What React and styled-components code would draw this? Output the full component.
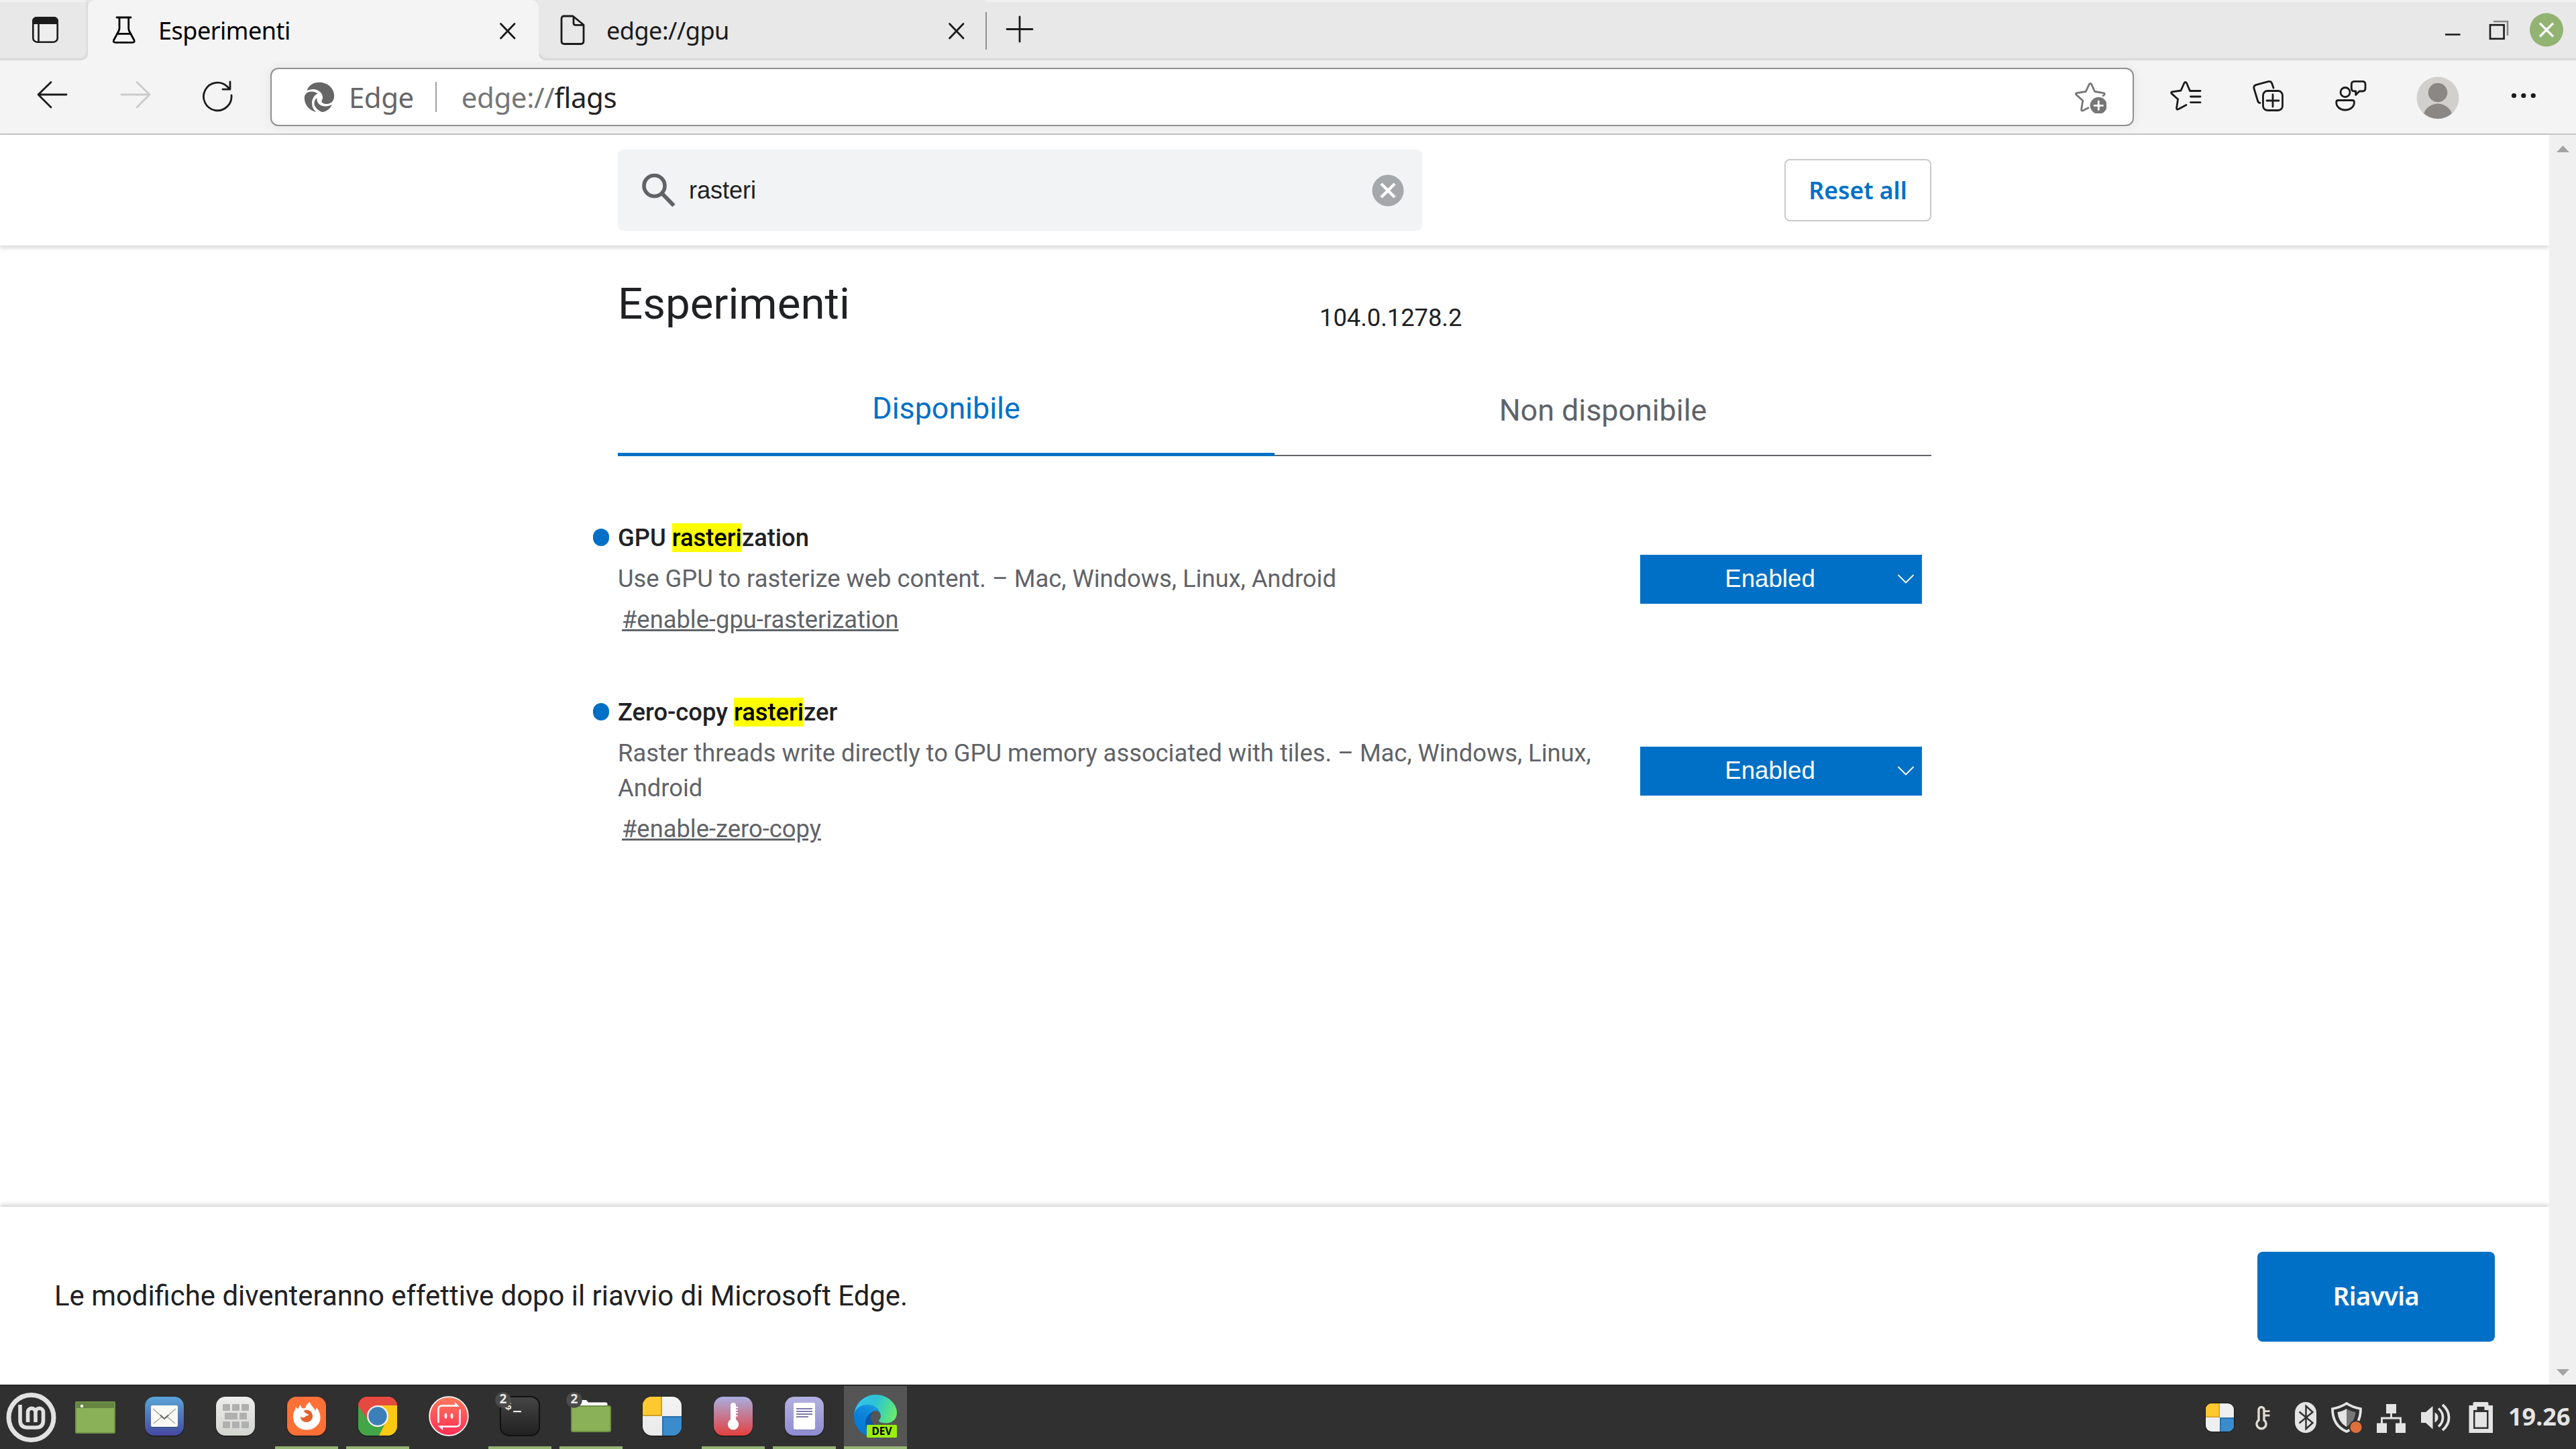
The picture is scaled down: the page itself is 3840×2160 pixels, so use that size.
import React from "react";
import styled, { createGlobalStyle } from "styled-components";

const GlobalStyle = createGlobalStyle`
  * {
    box-sizing: border-box;
  }
  body {
    margin: 0;
    background-color: white;
    font-family: Roboto, sans-serif;
  }
  svg {
    display: block;
    flex-shrink: 0;
  }
`;

const Screen = styled.div`
  width: 3840px;
  height: 2160px;
  display: flex;
  flex-direction: column;
  overflow: hidden;
`;

/* tab strip */
const TabStrip = styled.div`
  height: 90px;
  display: flex;
  background-color: #f4f4f4;
  font-family: "Noto Sans", sans-serif;
`;
const StripStart = styled.div`
  width: 131px;
  padding: 22px 0 0 46px;
  background: linear-gradient(#f0f0f0 3px, #e8e8e8 3px);
  border-bottom-right-radius: 10px;
  box-shadow: inset -2px -3px 3px rgba(0, 0, 0, 0.07);
`;
const ActiveTabShell = styled.div`
  width: 672px;
  background: linear-gradient(#e8e8e8 20px, #f4f4f4 20px);
`;
const ActiveTab = styled.div`
  height: 90px;
  display: flex;
  padding: 22px 33px 0 33px;
  background-color: #f4f4f4;
  border-radius: 12px 12px 0 0;
`;
const StripRest = styled.div`
  flex: 1;
  display: flex;
  background: linear-gradient(#f0f0f0 3px, #e8e8e8 3px);
  border-bottom-left-radius: 10px;
  box-shadow: inset 2px -3px 3px rgba(0, 0, 0, 0.07);
`;
const Tab = styled.div`
  width: 666px;
  height: 80px;
  display: flex;
  padding: 22px 30px 0 29px;
  background-color: #e8e8e8;
`;
const TabTitle = styled.div`
  flex: 1;
  margin-left: 30px;
  font-size: 36px;
  line-height: 48px;
  letter-spacing: -0.5px;
  color: ${(props) => props.color};
`;
const TabDivider = styled.div`
  width: 2px;
  height: 56px;
  margin-top: 18px;
  background-color: #8f8f8f;
`;
const WindowControls = styled.div`
  display: flex;
  margin: 18px 19px 0 auto;
`;

/* toolbar */
const Toolbar = styled.div`
  height: 111px;
  display: flex;
  align-items: flex-start;
  background-color: #f4f4f4;
  border-bottom: 2px solid #c4c4c4;
`;
const ToolButton = styled.div`
  margin: 29px 0 0 ${(props) => props.$gap}px;
`;
const AddressBar = styled.div`
  width: 2778px;
  height: 87px;
  margin: 11px 0 0 55px;
  padding: 0 39px 0 48px;
  display: flex;
  align-items: center;
  background-color: white;
  border: 2.5px solid #8f8f8f;
  border-radius: 12px;
  box-shadow: 0 0 16px rgba(0, 0, 0, 0.08);
  font-family: "Noto Sans", sans-serif;
  font-size: 42px;
  letter-spacing: -0.5px;
  color: #666;
`;
const SiteName = styled.span`
  margin-left: 21px;
`;
const AddressDivider = styled.div`
  width: 2px;
  height: 45px;
  margin: 0 37px 0 32px;
  background-color: #a0a0a0;
`;
const Url = styled.span`
  flex: 1;
  letter-spacing: -0.4px;
  color: #767676;
  b {
    font-weight: 400;
    color: #222;
  }
`;
const Avatar = styled.div`
  margin: 24px 0 0 74px;
`;

/* page */
const Viewport = styled.div`
  height: 1863px;
  display: flex;
`;
const Page = styled.div`
  width: 3800px;
  display: flex;
  flex-direction: column;
  color: #202124;
`;
const Scrollbar = styled.div`
  width: 40px;
  padding: 16px 0 13px 11px;
  display: flex;
  flex-direction: column;
  justify-content: space-between;
  background-color: #f0f0f0;
`;
const Header = styled.div`
  height: 165px;
  display: flex;
  justify-content: center;
  box-shadow: 0 4px 6px rgba(0, 0, 0, 0.15);
`;
const HeaderInner = styled.div`
  width: 1958px;
  display: flex;
  align-items: center;
  justify-content: space-between;
`;
const SearchBox = styled.div`
  width: 1199px;
  height: 121px;
  display: flex;
  align-items: center;
  padding: 0 27px 0 36px;
  background-color: #f1f3f4;
  border-radius: 8px;
`;
const SearchText = styled.div`
  flex: 1;
  margin-left: 18px;
  font-family: "Liberation Sans", sans-serif;
  font-size: 36px;
`;
const ResetButton = styled.div`
  width: 219px;
  height: 93px;
  border: 2px solid #cacaca;
  border-radius: 8px;
  text-align: center;
  font-family: "Noto Sans", sans-serif;
  font-size: 35.5px;
  font-weight: 600;
  line-height: 89px;
  color: #0070c6;
`;
const Main = styled.div`
  flex: 1;
  width: 1958px;
  margin: 0 auto;
`;
const TitleRow = styled.div`
  height: 84px;
  margin-top: 48px;
  display: flex;
`;
const Title = styled.h1`
  width: 1046px;
  margin: 0;
  font-size: 65.4px;
  font-weight: 400;
  line-height: 78px;
`;
const Version = styled.div`
  margin-top: 38px;
  font-size: 36.3px;
  line-height: 44px;
`;
const Tabs = styled.div`
  height: 119px;
  margin-top: 63px;
  display: flex;
`;
const PageTab = styled.div`
  flex: 1;
  padding-top: ${(props) => (props.$active ? 21 : 24)}px;
  border-bottom: ${(props) =>
    props.$active ? "5px solid #0070c6" : "2px solid #5f6368"};
  color: ${(props) => (props.$active ? "#0070c6" : "#5f6368")};
  text-align: center;
  font-size: 44.8px;
  line-height: 54px;
`;
const Experiments = styled.div`
  margin-top: 96px;
  display: flex;
  flex-direction: column;
  gap: 86px;
`;
const Experiment = styled.div`
  position: relative;
  display: flex;
  align-items: center;
  justify-content: space-between;
  padding-right: 14px;
  font-size: 36.33px;
  line-height: 52px;
  color: #5f6368;
  &::before {
    content: "";
    position: absolute;
    left: -37px;
    top: 12px;
    width: 24px;
    height: 26px;
    border-radius: 12px;
    background-color: #0070c6;
  }
`;
const Info = styled.div`
  width: 1490px;
`;
const Name = styled.div`
  font-weight: 500;
  color: #202124;
  mark {
    background-color: #ff0;
  }
`;
const Description = styled.div`
  margin: 9px 0;
`;
const Anchor = styled.a`
  display: block;
  margin-left: 6px;
  text-decoration: underline;
`;
const Select = styled.div`
  width: 420px;
  height: 73px;
  display: flex;
  align-items: center;
  padding-right: 12px;
  background-color: #0070c6;
  color: white;
  font-family: "Liberation Sans", sans-serif;
  font-size: 36.7px;
`;
const SelectValue = styled.div`
  flex: 1;
  padding-left: 3px;
  text-align: center;
`;
const Footer = styled.div`
  height: 265px;
  display: flex;
  align-items: center;
  justify-content: space-between;
  padding: 0 81px 0 81px;
  box-shadow: 0 -4px 6px rgba(0, 0, 0, 0.15);
  font-size: 41.9px;
`;
const RestartButton = styled.div`
  width: 354px;
  height: 134px;
  margin-top: 3px;
  border-radius: 8px;
  background-color: #0070c6;
  color: white;
  text-align: center;
  font-family: "Noto Sans", sans-serif;
  font-size: 38px;
  font-weight: 600;
  letter-spacing: -0.5px;
  line-height: 131px;
`;

/* desktop panel */
const Panel = styled.div`
  height: 96px;
  display: flex;
  background-color: #303030;
  border-top: 2px solid #262626;
`;
const Launchers = styled.div`
  display: flex;
  gap: 12px;
`;
const Launcher = styled.div`
  width: 94px;
  height: 94px;
  padding: 10px 12px 0;
  background-color: ${(props) => (props.$focused ? "#555" : "transparent")};
  border-bottom: 4px solid
    ${(props) => (props.$running ? "#92b372" : "transparent")};
  background-clip: padding-box;
`;
const Tray = styled.div`
  display: flex;
  margin-left: auto;
  padding: 22px 7px 0 0;
`;
const TrayItem = styled.div`
  margin-left: ${(props) => props.$gap}px;
`;
const Clock = styled.div`
  width: 94px;
  margin-left: 21px;
  font-family: "Noto Sans", sans-serif;
  font-size: 36px;
  font-weight: 700;
  line-height: 48px;
  white-space: nowrap;
  color: #e4e4e4;
`;

const Line = ({ size = 48, height, color = "#1b1b1b", width = 2.8, children }) => (
  <svg
    width={size}
    height={height || size}
    fill="none"
    stroke={color}
    strokeWidth={width}
    strokeLinecap="round"
    strokeLinejoin="round"
  >
    {children}
  </svg>
);

const CloseIcon = () => (
  <Line size={26} height={48} width={2.8}>
    <path d="M2.5 13.5L23 35M23 13.5L2.5 35" />
  </Line>
);

const EdgeSwirl = () => (
  <svg width="46" height="46" fill="#666">
    <path d="M4.5 13C7 5 14 .7 23 .7C36 .7 45.2 10 45.2 21C45.2 28 41 33 34 33C30 33 26.5 31.5 26.5 29C26.5 27 28 26.5 28 23C28 16 21 11 14 11C10 11 7 12 4.5 13Z" />
    <path d="M.8 24C.8 17.5 6 14.5 11.5 14.5C15 14.5 18 15.5 20.5 17.5C15 20 12 26 12 32C12 37 14.5 42 18.5 45C8 43 .8 34 .8 24Z" />
    <path d="M19.5 24C18.5 31 24 36.5 32 36.5C36 36.5 39 35.5 42 34C39 40.5 33.5 44.5 27 45C19 42 15 36 15.5 31C15.7 28 17 25.5 19.5 24Z" />
  </svg>
);

const StarAdd = () => (
  <Line color="#767676">
    <path d="M43 21.7L45 20Q46 18.2 43.5 17.7L30.7 15.5L25.8 4.8Q24 1.8 22.2 4.8L17.3 15.5L4 17.6Q1.3 18.4 3.2 20.4L12.8 29L10.7 41.7Q10.5 45 13.3 43.8L21 39.8" />
    <circle cx="36.3" cy="36.3" r="12.6" fill="#767676" stroke="none" />
    <path d="M36.3 30V42.6M30 36.3H42.6" stroke="white" />
  </Line>
);

const Tile = ({ id, top, bottom, edge = "#1c1c1c", children }) => (
  <svg width="70" height="70">
    <defs>
      <linearGradient id={id} x2="0" y2="1">
        <stop stopColor={top} />
        <stop offset="1" stopColor={bottom} />
      </linearGradient>
      <clipPath id={id + "-clip"}>
        <rect x="6" y="6" width="58" height="58" rx="14" />
      </clipPath>
    </defs>
    <rect x="5.5" y="5.5" width="59" height="60" rx="14.5" fill={edge} />
    <rect x="6" y="6" width="58" height="58" rx="14" fill={`url(#${id})`} />
    <g clipPath={`url(#${id}-clip)`}>{children}</g>
  </svg>
);

const MintMenu = () => (
  <svg width="92" height="94" fill="none" stroke="#e2e2e2">
    <circle cx="46.5" cy="47" r="33.5" strokeWidth="7" />
    <path
      d="M30 28V51Q30 62 41 62H54Q64.5 62 64.5 51V39A5.7 5.7 0 0 0 53 39V54M41.5 54V39A5.7 5.7 0 0 1 53 39"
      strokeWidth="5.6"
    />
  </svg>
);

const ShowDesktop = () => (
  <svg width="70" height="70">
    <rect x="8" y="13" width="60" height="48" rx="2" fill="#6f9148" />
    <rect x="10" y="23" width="56" height="36" fill="#8bb158" />
    <rect x="10" y="15" width="56" height="8" fill="#668542" />
    <circle cx="18" cy="20" r="2.2" fill="white" />
  </svg>
);

const Mail = () => (
  <Tile id="mail" top="#59a5d8" bottom="#4548a0">
    <rect x="15" y="21" width="40" height="32" rx="2" fill="#3c4f8f" />
    <rect x="15" y="19" width="40" height="32" rx="2" fill="#f8f8f4" />
    <path d="M18 24L35 39L52 24M19 46L31 36M51 46L39 36" fill="none" stroke="#a5a5a0" strokeWidth="1.4" />
    <path d="M29 33.5L35 39L41 33.5" fill="none" stroke="#666" strokeWidth="2" />
  </Tile>
);

const calcKeys = [
  [16, 17, 11], [30, 17, 11], [44, 17, 11],
  [19, 30, 19], [41, 30, 11],
  [16, 43, 11], [30, 43, 11], [44, 43, 11],
];

const Keyboard = () => (
  <Tile id="keys" top="#ededed" bottom="#d3d5cf">
    {calcKeys.map(([x, y, w]) => (
      <rect key={`${x}-${y}`} x={x} y={y} width={w} height="10" rx="1" fill="#b0b0ae" />
    ))}
  </Tile>
);

const Firefox = () => (
  <Tile id="firefox" top="#ff7139" bottom="#ff6f36">
    <path
      d="M40 14C41 19 46 22 48 27L50 22.5C53 26 55.5 31 55.5 37C55.5 48 46 55.5 35 55.5C24 55.5 15 48 15 36.5C15 31 16 28 18 25.5L18.5 21L22 24.5L25.5 18L28 23C31 24 33 23 34 22C34 18 37 16 40 14Z"
      fill="white"
    />
    <path
      d="M31 27C37 23.5 44 28 44 35C44 40.5 40 44 35 44C29.5 44 26 40 26 35.5C29 38.5 33 37 34 34.5C36 34.5 38 34 38 32.5C36 31 33 31.5 31 27Z"
      fill="#e4622c"
    />
  </Tile>
);

const Chrome = () => (
  <Tile id="chrome" top="#e9574d" bottom="#2f9a45">
    <path d="M5 5H65V20H35L20.5 40L6 20Z" fill="#e5493f" />
    <path d="M5 18L20.5 42L45 46L37 65H5Z" fill="#43a547" />
    <path d="M35 19H65V65H36.5L49 40Z" fill="#fbc912" />
    <circle cx="35" cy="35" r="16" fill="#f4f4f4" />
    <circle cx="35" cy="35" r="13.7" fill="#3d7fb8" />
  </Tile>
);

const SyncApp = () => (
  <svg width="70" height="70" fill="none">
    <defs>
      <linearGradient id="sync" x2="0" y2="1">
        <stop stopColor="#ff7b5c" />
        <stop offset="1" stopColor="#ff2c56" />
      </linearGradient>
    </defs>
    <circle cx="35" cy="35" r="28.8" fill="url(#sync)" stroke="white" strokeWidth="1.8" />
    <path
      d="M19.5 45V25Q19.5 19.5 25 19.5H48M51.5 25V45Q51.5 50.5 46 50.5H22"
      stroke="white"
      strokeWidth="2.6"
    />
    <path d="M44 14L51 20.8H44ZM26 56L19 49.2H26Z" fill="white" />
    <path d="M30.5 32.5V37M39.5 32.5V37" stroke="white" strokeWidth="3.6" strokeLinecap="round" />
  </svg>
);

const Badge = () => (
  <>
    <circle cx="10" cy="11" r="11.8" fill="#4a4a4a" />
    <text x="10" y="15.5" textAnchor="middle" fontFamily="Noto Sans" fontWeight="700" fontSize="19" fill="#e8e8e8">
      2
    </text>
  </>
);

const Terminal = () => (
  <svg width="70" height="70" overflow="visible">
    <defs>
      <linearGradient id="term" x2="0" y2="1">
        <stop stopColor="#454545" />
        <stop offset="1" stopColor="#202020" />
      </linearGradient>
    </defs>
    <rect x="6" y="6" width="58" height="58" rx="13" fill="url(#term)" stroke="#111" strokeWidth="2" />
    <text x="12.5" y="25" fontFamily="Liberation Mono" fontWeight="700" fontSize="17" fill="#eee">
      $
    </text>
    <rect x="25" y="27" width="12" height="2.2" fill="#eee" />
    <Badge />
  </svg>
);

const Files = () => (
  <svg width="70" height="70" overflow="visible">
    <path d="M15 24V13Q15 11 17 11H28L31 14.5H57Q59.5 14.5 59.5 17V24Z" fill="white" />
    <rect x="5" y="19" width="60" height="40" rx="3" fill="#6f9148" />
    <rect x="7" y="21" width="56" height="36" rx="1.5" fill="#8bb158" />
    <Badge />
  </svg>
);

const Quad = () => (
  <Tile id="quad" top="#f4f4f4" bottom="#e9e9e9">
    <path d="M5 5H35V35H5Z" fill="#cf9f24" />
    <path d="M5 5H33V33H5Z" fill="#fdc92f" />
    <path d="M35 35H65V65H35Z" fill="#2a6fa8" />
    <path d="M37 37H65V65H37Z" fill="#3a8ccd" />
  </Tile>
);

const Thermometer = () => (
  <Tile id="thermo" top="#a9aee0" bottom="#e4403e">
    <path d="M31 19A4 4 0 0 1 39 19V40A8.2 8.2 0 1 1 31 40Z" fill="white" />
    <path d="M39 22H42M39 26H41.5M39 30H42M39 34.5H41.5" stroke="white" strokeWidth="2" />
  </Tile>
);

const Notes = () => (
  <Tile id="notes" top="#b3b1e0" bottom="#8f8bd2">
    <rect x="19" y="17" width="32" height="39" rx="2" fill="#7773b5" />
    <rect x="19" y="15" width="32" height="40" rx="2" fill="white" />
    <path d="M23 24H47M23 28H47M23 32H47M23 36H41" stroke="#7f79ad" strokeWidth="2" />
  </Tile>
);

const EdgeDev = () => (
  <svg width="70" height="70">
    <defs>
      <linearGradient id="edge-a" x1="0.2" y1="0.6" x2="1" y2="0.6">
        <stop stopColor="#0c59a4" />
        <stop offset="1" stopColor="#114a8b" />
      </linearGradient>
      <linearGradient id="edge-b" x1="0.7" y1="0" x2="0.3" y2="1">
        <stop stopColor="#1b9de2" />
        <stop offset="0.5" stopColor="#0a7fd9" />
        <stop offset="1" stopColor="#0078d4" />
      </linearGradient>
      <linearGradient id="edge-c" x1="0" y1="0.3" x2="1" y2="0.6">
        <stop stopColor="#35c1f1" />
        <stop offset="0.45" stopColor="#2cc3d5" />
        <stop offset="1" stopColor="#66eb6e" />
      </linearGradient>
    </defs>
    <g transform="translate(3 3) scale(0.25)">
      <path
        d="M235.7 195.5a93.7 93.7 0 0 1-10.6 4.7 101.9 101.9 0 0 1-35.9 6.4c-47.3 0-88.5-32.5-88.5-74.3a31.5 31.5 0 0 1 16.4-27.3c-42.8 1.8-53.8 46.4-53.8 72.5 0 74 68.1 81.4 82.8 81.4 7.9 0 19.8-2.3 27-4.6l1.3-.4a128.3 128.3 0 0 0 66.6-52.8 4 4 0 0 0-5.3-5.6Z"
        fill="url(#edge-a)"
      />
      <path
        d="M105.7 241.4a79.2 79.2 0 0 1-22.7-21.3 80.7 80.7 0 0 1 29.5-120c3.2-1.5 8.5-4.1 15.6-4a32.4 32.4 0 0 1 25.7 13 31.9 31.9 0 0 1 6.3 18.7c0-.2 24.5-79.6-80-79.6-43.9 0-80 41.6-80 78.2a130.2 130.2 0 0 0 12.1 56 128 128 0 0 0 156.4 67 75.5 75.5 0 0 1-62.8-8Z"
        fill="url(#edge-b)"
      />
      <path
        d="M152.3 148.9c-.9 1-3.4 2.5-3.4 5.6 0 2.6 1.7 5.2 4.8 7.3 14.3 10 41.4 8.6 41.5 8.6a59.6 59.6 0 0 0 30.3-8.3 61.4 61.4 0 0 0 30.4-52.9c.3-22.4-8-37.3-11.3-43.9C223.5 23.9 177.7 0 128 0A128 128 0 0 0 0 126.2c.5-36.5 36.8-66 80-66 3.5 0 23.5.3 42 10a72.6 72.6 0 0 1 30.9 29.3c6.1 10.6 7.2 24.1 7.2 29.5s-2.7 13.3-7.8 19.9Z"
        fill="url(#edge-c)"
      />
    </g>
    <rect x="22" y="48" width="45" height="19" rx="1.5" fill="#9bf00b" />
    <text x="44.5" y="63.3" textAnchor="middle" fontFamily="Noto Sans" fontWeight="700" fontSize="15.5" fill="black">
      DEV
    </text>
  </svg>
);

const launchers = [
  { icon: <ShowDesktop /> },
  { icon: <Mail /> },
  { icon: <Keyboard /> },
  { icon: <Firefox />, running: true },
  { icon: <Chrome />, running: true },
  { icon: <SyncApp /> },
  { icon: <Terminal />, running: true },
  { icon: <Files />, running: true },
  { icon: <Quad /> },
  { icon: <Thermometer />, running: true },
  { icon: <Notes />, running: true },
  { icon: <EdgeDev />, running: true, focused: true },
];

const SystemTray = () => (
  <Tray>
    <TrayItem $gap={0}>
      <svg width="46" height="50">
        <clipPath id="tray-quad">
          <rect x="2" y="4" width="42" height="42" rx="9" />
        </clipPath>
        <rect x="1" y="3" width="44" height="44" rx="10" fill="#151515" />
        <g clipPath="url(#tray-quad)">
          <path d="M2 4H44V46H2Z" fill="#efefef" />
          <path d="M2 4H23V25H2Z" fill="#cf9f24" />
          <path d="M2 4H21.5V23.5H2Z" fill="#fdc92f" />
          <path d="M23 25H44V46H23Z" fill="#2a6fa8" />
          <path d="M25 27H44V46H25Z" fill="#3a8ccd" />
        </g>
      </svg>
    </TrayItem>
    <TrayItem $gap={30}>
      <svg width="24" height="50" fill="none" stroke="#e0dcd4" strokeWidth="3.4">
        <path d="M5 13.5A4 4 0 0 1 13 13.5V29A7 7 0 1 1 5 29Z" />
        <path d="M14 15.7H21.5M14 22H21.5" strokeWidth="2.8" />
      </svg>
    </TrayItem>
    <TrayItem $gap={34}>
      <svg width="34" height="50">
        <rect x="1" y="2" width="32" height="46" rx="16" fill="#e4e4e4" />
        <path d="M7.5 16.5L27.5 33L17.5 42V8L27.5 17L7.5 33.5" fill="none" stroke="#303030" strokeWidth="2.4" />
      </svg>
    </TrayItem>
    <TrayItem $gap={20}>
      <svg width="50" height="50">
        <path d="M24 4Q33 10 45 12Q45 37 24 46Q3 37 3 12Q15 10 24 4Z" fill="none" stroke="#e4e4e4" strokeWidth="3.8" />
        <path d="M24 12Q30 16 37.5 17Q36.5 32 24 39Z" fill="#777" />
        <path d="M24 12Q18 16 10.5 17Q11.5 32 24 39Z" fill="#e4e4e4" />
        <circle cx="38" cy="39.5" r="10.5" fill="#303030" />
        <circle cx="38" cy="39.5" r="8.6" fill="#de6f3b" />
      </svg>
    </TrayItem>
    <TrayItem $gap={18}>
      <svg width="46" height="50" fill="#e4e4e4">
        <path d="M15 5H30V19H15ZM1 33.5H16V48H1ZM29 33.5H44V48H29Z" />
        <path d="M22.5 19V26M8.5 34V26H36.5V34" fill="none" stroke="#e4e4e4" strokeWidth="2.8" />
      </svg>
    </TrayItem>
    <TrayItem $gap={20}>
      <svg width="48" height="50" fill="none" stroke="#e4e4e4">
        <path d="M1 17H8L18.5 8V42.5L8 33H1Z" fill="#e4e4e4" stroke="none" />
        <path d="M21.5 17.5Q26.5 20 26.5 25T21.5 32.5Z" fill="#e4e4e4" stroke="none" />
        <path d="M27 11.5Q33.5 17 33.5 25T27 38.5" strokeWidth="3.6" />
        <path d="M33 6Q42.5 14 42.5 25T33 44" strokeWidth="3.8" />
      </svg>
    </TrayItem>
    <TrayItem $gap={24}>
      <svg width="38" height="50">
        <path d="M.5 7H6.5V4Q6.5 2 8.5 2H27.5Q29.5 2 29.5 4V7H36V48H.5Z" fill="#e4e4e4" />
        <path d="M7 14H12.5V9H23.5V14H29.5V42H7Z" fill="#303030" />
        <path d="M9.5 17H27V39.5H9.5Z" fill="#e4e4e4" />
      </svg>
    </TrayItem>
    <Clock>19.26</Clock>
  </Tray>
);

const App = () => {
  return (
    <Screen>
      <GlobalStyle />
      <TabStrip>
        <StripStart>
          <svg width="44" height="44">
            <rect x="3.3" y="4.3" width="36.4" height="36.4" rx="6" fill="#eee" stroke="#1b1b1b" strokeWidth="2.6" />
            <path d="M2 14V10Q2 3 9 3H34Q41 3 41 10V14Z" fill="#1b1b1b" />
            <path d="M11.5 14V40" stroke="#1b1b1b" strokeWidth="2.6" />
          </svg>
        </StripStart>
        <ActiveTabShell>
          <ActiveTab>
            <Line size={42} height={46} color="#000">
              <path d="M10 4H31M14 5V20Q14 22 13 24L5.5 38Q4.5 41.3 8 41.3H33.5Q37 41.3 36 38L28.5 24Q27.7 22 27.7 20V5M11 28.3H31" />
            </Line>
            <TabTitle color="#000">Esperimenti</TabTitle>
            <CloseIcon />
          </ActiveTab>
        </ActiveTabShell>
        <StripRest>
          <Tab>
            <Line size={42} height={46}>
              <path d="M9 2H22L38 15V39Q38 43.5 33.5 43.5H9.5Q5 43.5 5 39V6Q5 2 9 2ZM23 3V12.5Q23 15.3 26 15.3H37" />
            </Line>
            <TabTitle color="#1b1b1b">edge://gpu</TabTitle>
            <CloseIcon />
          </Tab>
          <TabDivider />
          <Line size={70} height={90}>
            <path d="M30 43.5H68M49 25V62" />
          </Line>
          <WindowControls>
            <svg width="130" height="54" fill="none" stroke="#1b1b1b" strokeWidth="2.6">
              <path d="M4 33.5H26.5" />
              <path d="M76 14H97V35" stroke="#888" />
              <rect x="71" y="19.2" width="20.6" height="20.6" />
            </svg>
            <svg width="50" height="54">
              <circle cx="25" cy="26.5" r="25" fill="#92b372" />
              <path d="M15 16.5L35 36.5M35 16.5L15 36.5" stroke="white" strokeWidth="3.2" />
            </svg>
          </WindowControls>
        </StripRest>
      </TabStrip>

      <Toolbar>
        <ToolButton $gap={54}>
          <Line>
            <path d="M45 22H3M22 3.5L3 22L22 41" />
          </Line>
        </ToolButton>
        <ToolButton $gap={76}>
          <Line color="#cbcbcb">
            <path d="M3 22H45M26 3.5L45 22L26 41" />
          </Line>
        </ToolButton>
        <ToolButton $gap={74}>
          <Line>
            <path d="M45 23A20.8 20.8 0 1 1 39 10.2L42.5 14M43 3V14.2H32" />
          </Line>
        </ToolButton>
        <AddressBar>
          <EdgeSwirl />
          <SiteName>Edge</SiteName>
          <AddressDivider />
          <Url>
            edge://<b>flags</b>
          </Url>
          <StarAdd />
        </AddressBar>
        <ToolButton $gap={53}>
          <Line>
            <path d="M46 16.5H30.5L25.5 4.8Q23.7 2 22 4.8L17 16L4 17.9Q1.5 18.7 3.4 20.6L12.6 29L10.6 41.7Q10.5 45 13.2 43.8L25 37.4" />
            <path d="M31.5 25H46M31.5 33.7H46" />
          </Line>
        </ToolButton>
        <ToolButton $gap={75}>
          <Line>
            <path d="M12 34.3Q9.5 34.5 8.5 31L3 13Q2 8.5 6.5 7.3L24 2.6Q28.5 1.5 29.8 5.5L32 12" />
            <rect x="16.5" y="16.5" width="29" height="29" rx="6.5" />
            <path d="M31 22V40M22 31H40" />
          </Line>
        </ToolButton>
        <ToolButton $gap={75}>
          <Line>
            <circle cx="16" cy="18.5" r="7" />
            <path d="M5.7 30.5H26.5Q29.4 30.5 29.4 33.5C29.4 40.5 23 45 16 45S2.7 40.5 2.7 33.5Q2.7 30.5 5.7 30.5Z" />
            <path d="M29.5 2.3H41.5Q46 2.3 46 6.8V12.5Q46 17 41.5 17H37L31.7 22.5V17H29.5Q25.3 17 25.3 12.5V6.8Q25.3 2.3 29.5 2.3Z" />
          </Line>
        </ToolButton>
        <Avatar>
          <svg width="64" height="64">
            <clipPath id="avatar">
              <circle cx="32" cy="32" r="31" />
            </clipPath>
            <circle cx="32" cy="32" r="31.5" fill="#d2d0cd" />
            <g clipPath="url(#avatar)" fill="#8a8784">
              <circle cx="32" cy="24" r="14.3" />
              <ellipse cx="32" cy="62" rx="22" ry="21.5" />
            </g>
          </svg>
        </Avatar>
        <ToolButton $gap={72}>
          <svg width="48" height="48" fill="#1b1b1b">
            <circle cx="9.5" cy="23.5" r="3.6" />
            <circle cx="23.8" cy="23.5" r="3.6" />
            <circle cx="38.3" cy="23.5" r="3.6" />
          </svg>
        </ToolButton>
      </Toolbar>

      <Viewport>
        <Page>
          <Header>
            <HeaderInner>
              <SearchBox>
                <svg width="52" height="52" fill="none" stroke="#5f6368">
                  <circle cx="18.5" cy="19" r="15.5" strokeWidth="5.6" />
                  <path d="M29.5 30L47.5 48.5" strokeWidth="6" />
                </svg>
                <SearchText>rasteri</SearchText>
                <svg width="48" height="48">
                  <circle cx="24" cy="24" r="23.5" fill="#a5a8ab" />
                  <path d="M14 14L34 34M34 14L14 34" stroke="white" strokeWidth="4.4" />
                </svg>
              </SearchBox>
              <ResetButton>Reset all</ResetButton>
            </HeaderInner>
          </Header>

          <Main>
            <TitleRow>
              <Title>Esperimenti</Title>
              <Version>104.0.1278.2</Version>
            </TitleRow>
            <Tabs>
              <PageTab $active>Disponibile</PageTab>
              <PageTab>Non disponibile</PageTab>
            </Tabs>
            <Experiments>
              <Experiment>
                <Info>
                  <Name>
                    GPU <mark>rasteri</mark>zation
                  </Name>
                  <Description>
                    Use GPU to rasterize web content. – Mac, Windows, Linux,
                    Android
                  </Description>
                  <Anchor>#enable-gpu-rasterization</Anchor>
                </Info>
                <Select>
                  <SelectValue>Enabled</SelectValue>
                  <Line size={24} height={20} color="white" width={1.8}>
                    <path d="M1 4.5L12 15.5L23 4.5" />
                  </Line>
                </Select>
              </Experiment>
              <Experiment>
                <Info>
                  <Name>
                    Zero-copy <mark>rasteri</mark>zer
                  </Name>
                  <Description>
                    Raster threads write directly to GPU memory associated with
                    tiles. – Mac, Windows, Linux, Android
                  </Description>
                  <Anchor>#enable-zero-copy</Anchor>
                </Info>
                <Select>
                  <SelectValue>Enabled</SelectValue>
                  <Line size={24} height={20} color="white" width={1.8}>
                    <path d="M1 4.5L12 15.5L23 4.5" />
                  </Line>
                </Select>
              </Experiment>
            </Experiments>
          </Main>

          <Footer>
            Le modifiche diventeranno effettive dopo il riavvio di Microsoft
            Edge.
            <RestartButton>Riavvia</RestartButton>
          </Footer>
        </Page>
        <Scrollbar>
          <svg width="19" height="10" fill="#a3a3a3">
            <path d="M0 10L9.5 0L19 10Z" />
          </svg>
          <svg width="19" height="10" fill="#a3a3a3">
            <path d="M0 0L9.5 10L19 0Z" />
          </svg>
        </Scrollbar>
      </Viewport>

      <Panel>
        <MintMenu />
        <Launchers>
          {launchers.map((item, i) => (
            <Launcher key={i} $running={item.running} $focused={item.focused}>
              {item.icon}
            </Launcher>
          ))}
        </Launchers>
        <SystemTray />
      </Panel>
    </Screen>
  );
};

export default App;
